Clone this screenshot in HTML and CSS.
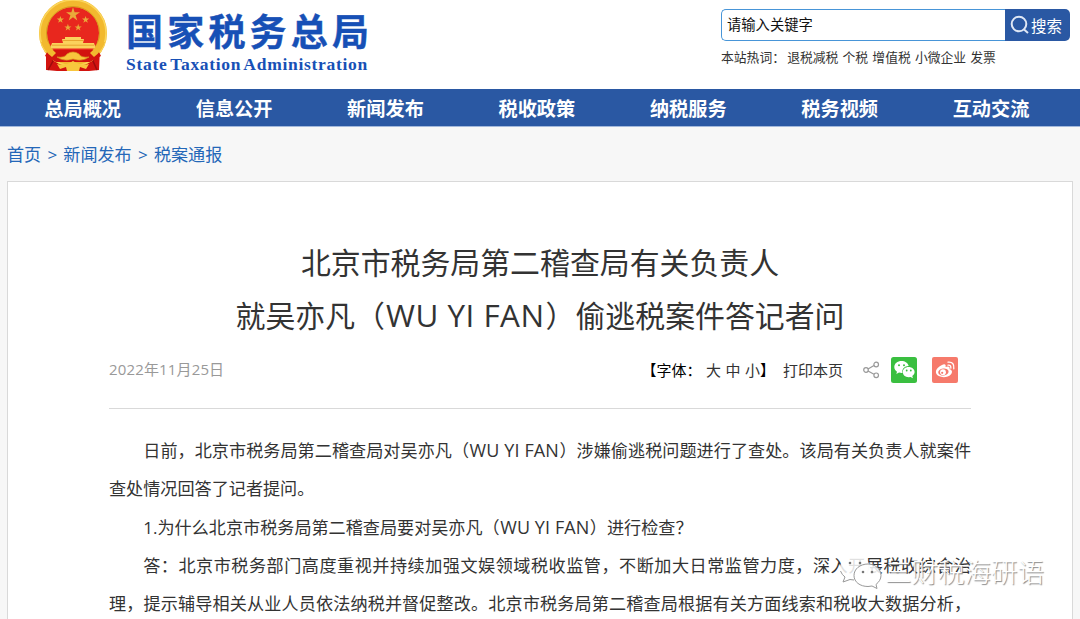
FILE: index.html
```html
<!DOCTYPE html>
<html lang="zh-CN">
<head>
    <meta charset="UTF-8">
    <meta name="viewport" content="width=device-width, initial-scale=1.0">
    <title>国家税务总局</title>
    <link rel="stylesheet" href="styles.css">
</head>
<body>
    <header class="header">
        <a class="logo" href="#">
            <svg class="emblem" width="70" height="74" viewBox="0 0 70 74">
                <path d="M8 48 L26 58 L35 68 L44 58 L62 48 L61 70 L51 71 L19 71 L8 70 L8 66 Z" fill="#d2130f"/>
                <path d="M10 52 L15 61 L10 70 M60 52 L55 61 L59 70" fill="none" stroke="#9c0c0c" stroke-width="1.5"/>
                <circle cx="35" cy="33" r="30" fill="#e8271e" stroke="#f2b92f" stroke-width="8"/>
                <circle cx="35" cy="33" r="33" fill="none" stroke="#fbd65b" stroke-width="1.5"/>
                <circle cx="35" cy="33" r="26.5" fill="none" stroke="#d79a1e" stroke-width="1"/>
                <path d="M35 7 L36.6 12.2 L42 12.2 L37.6 15.3 L39.3 20.4 L35 17.2 L30.7 20.4 L32.4 15.3 L28 12.2 L33.4 12.2 Z" fill="#e9a93a"/>
                <g fill="#e9a93a">
                    <path id="star" d="M22.4 16 L23.3 18.6 L26 18.6 L23.8 20.2 L24.6 22.8 L22.4 21.2 L20.2 22.8 L21 20.2 L18.8 18.6 L21.5 18.6 Z"/>
                    <use href="#star" x="25.2"/>
                    <use href="#star" x="7.5" y="7.8"/>
                    <use href="#star" x="17.8" y="7.8"/>
                </g>
                <path d="M27 37 H43 V39 H46 L45 43 H56 L58 48.500 H12 L14 43 H25 L24 39 H27 Z" fill="#fbd15c"/>
                <path d="M25 40.5 H45 M14 45.2 H56" stroke="#e39b25" stroke-width=".8"/>
                <path d="M10 50 L60 50 L63 56 L52 62 L18 62 L7 56 Z" fill="#d2130f"/>
                <path d="M3 42 Q6 51 14 57 L18 53 Q12 48 10 42 Z M67 42 Q64 51 56 57 L52 53 Q58 48 60 42 Z" fill="#f2b92f"/>
                <path d="M19 57 Q27 58 29 54 Q35 50 41 54 Q43 58 51 57 Q44 62 35 59 Q26 62 19 57 Z" fill="#f8c63d" stroke="#d79a1e" stroke-width=".7"/>
                <path d="M19 64 Q28 66 35 61 Q42 66 51 64 L48 69 L42 67 L41 71 H29 L28 67 L22 69 Z" fill="#f8c63d"/>
            </svg>
            <span class="logo-text">
                <span class="logo-cn">国家税务总局</span>
                <span class="logo-en">State Taxation Administration</span>
            </span>
        </a>
        <div class="search">
            <div class="search-box">
                <div class="search-input">请输入关键字</div>
                <button class="search-btn">
                    <svg width="20" height="20" viewBox="0 0 20 20" fill="none" stroke="#dfe7f5" stroke-width="2">
                        <circle cx="9" cy="9" r="7.3"/>
                        <path d="M13.5 14 L18 18"/>
                    </svg>
                    <span>搜索</span>
                </button>
            </div>
            <div class="hot-words">
                <span class="hot-label">本站热词：</span>
                <a href="#">退税减税</a>
                <a href="#">个税</a>
                <a href="#">增值税</a>
                <a href="#">小微企业</a>
                <a href="#">发票</a>
            </div>
        </div>
    </header>

    <nav class="nav">
        <a href="#">总局概况</a>
        <a href="#">信息公开</a>
        <a href="#">新闻发布</a>
        <a href="#">税收政策</a>
        <a href="#">纳税服务</a>
        <a href="#">税务视频</a>
        <a href="#">互动交流</a>
    </nav>

    <div class="breadcrumb">
        <a href="#">首页</a>
        <span>&gt;</span>
        <a href="#">新闻发布</a>
        <span>&gt;</span>
        <a href="#">税案通报</a>
    </div>

    <main class="article">
        <h1 class="title">北京市税务局第二稽查局有关负责人<br>就吴亦凡（<span class="latin">WU YI FAN</span>）偷逃税案件答记者问</h1>
        <div class="meta">
            <span class="date">2022年11月25日</span>
            <div class="tools">
                <div class="font-size"><span class="strong">【字体：</span><a href="#">大</a><a href="#">中</a><a href="#">小</a><span class="strong">】</span></div>
                <a class="print" href="#">打印本页</a>
                <svg class="share" width="17" height="18" viewBox="0 0 17 18" fill="none" stroke="#999" stroke-width="1.2">
                    <circle cx="3" cy="9" r="2.3"/>
                    <circle cx="13.2" cy="3.5" r="2.3"/>
                    <circle cx="13.2" cy="14.3" r="2.3"/>
                    <path d="M5 8 L11 4.6 M5 10 L11 13.2"/>
                </svg>
                <svg class="wechat" width="26" height="26" viewBox="0 0 26 26">
                    <rect width="26" height="26" rx="2.5" fill="#3abf40"/>
                    <path d="M10.5 4 C6.4 4 3.3 6.6 3.3 10 C3.3 12 4.4 13.6 6 14.8 L5.3 17 L8 15.6 Q10 16.2 11.5 16 C10.4 12 14 8.8 17.7 9 C17 6 14 4 10.5 4 Z" fill="#fff"/>
                    <path d="M17.6 10 C14.2 10 11.8 12.3 11.8 15.1 C11.8 18 14.2 20.2 17.6 20.2 L19.6 19.9 L21.9 21.2 L21.3 19 C22.8 18 23.6 16.6 23.6 15.1 C23.6 12.3 21 10 17.6 10 Z" fill="#fff"/>
                    <g fill="#3abf40">
                        <circle cx="8" cy="8.2" r="1"/>
                        <circle cx="13" cy="8.2" r="1"/>
                        <circle cx="15.7" cy="13.5" r=".9"/>
                        <circle cx="19.8" cy="13.5" r=".9"/>
                    </g>
                </svg>
                <svg class="weibo" width="26" height="26" viewBox="0 0 26 26">
                    <rect width="26" height="26" rx="2" fill="#f67a6b"/>
                    <path d="M10 8 C13 6.3 14.3 8 13.5 10 C16.5 8.8 18.3 9.7 17.5 12.2 C20.3 13 20.8 15.3 18.8 17.4 C16.3 20.3 10.5 21 6.8 19 C3 17 3.3 13.5 5.7 11 Q7.6 9 10 8 Z" fill="#fff"/>
                    <ellipse cx="11.4" cy="15" rx="5.2" ry="3.5" transform="rotate(-8 11.4 15)" fill="#f67a6b"/>
                    <circle cx="11" cy="15.2" r="2.9" fill="#fff"/>
                    <circle cx="10.2" cy="15.8" r="1.1" fill="#f67a6b"/>
                    <path d="M16 8.2 Q19.2 7.8 18.8 11.2 M16 5.2 Q22.6 4.5 21.8 11.8" fill="none" stroke="#fff" stroke-width="1.3" stroke-linecap="round"/>
                </svg>
            </div>
        </div>
        <div class="content">
            <p>日前，北京市税务局第二稽查局对吴亦凡（<span class="latin">WU YI FAN</span>）涉嫌偷逃税问题进行了查处。该局有关负责人就案件查处情况回答了记者提问。</p>
            <p>1.为什么北京市税务局第二稽查局要对吴亦凡（<span class="latin">WU YI FAN</span>）进行检查？</p>
            <p class="full">答：北京市税务部门高度重视并持续加强文娱领域税收监管，不断加大日常监管力度，深入开展税收综合治理，提示辅导相关从业人员依法纳税并督促整改。北京市税务局第二稽查局根据有关方面线索和税收大数据分析，</p>
        </div>
    </main>

    <div class="watermark">
        <svg width="46" height="36" viewBox="0 0 46 36">
            <path d="M17 2 C8 2 2 7 2 14 C2 18 4 21 7 23 L5 29 L12 26 L17 27 C26 27 32 21 32 14 C32 7 26 2 17 2 Z" fill="#fff" fill-opacity=".85"/>
            <path d="M2.5 17 Q4 21 7 23 L5 28 L12 25.5 L16 26" fill="none" stroke="#999" stroke-width="1"/>
            <path d="M30 10 C22 10 16 15 16 21.500 C16 28 22 32.500 30 32.500 L34 32 L39 34.500 L38 30.500 C41 28 43 25 43 21.500 C43 15 37 10 30 10 Z" fill="#fff" fill-opacity=".85" stroke="#999" stroke-width="1"/>
            <g fill="#777">
                <circle cx="12" cy="9" r="1.3"/>
                <circle cx="22" cy="9" r="1.3"/>
                <circle cx="25" cy="18" r="1.3"/>
                <circle cx="34" cy="18" r="1.3"/>
            </g>
        </svg>
        <span>三财税海研语</span>
    </div>
</body>
</html>
```
FILE: styles.css
```css
* {
    margin: 0;
    padding: 0;
    box-sizing: border-box;
}

body {
    height: 619px;
    overflow: hidden;
    display: flex;
    flex-direction: column;
    position: relative;
    background-color: #f7f7f7;
    color: #333;
    font-family: "Open Sans", "Noto Sans CJK SC", sans-serif;
}

a {
    color: inherit;
    text-decoration: none;
}

/* Header */
.header {
    flex: none;
    height: 89px;
    display: flex;
    justify-content: space-between;
    align-items: flex-start;
    padding: 0 10px 0 38px;
    background-color: #fff;
}

.logo {
    display: flex;
    gap: 18px;
    color: #1750b6;
}

.emblem {
    display: block;
}

.logo-text {
    display: flex;
    flex-direction: column;
    padding-top: 6px;
}

.logo-cn {
    font: 700 37px/48px "Noto Sans CJK SC", sans-serif;
    letter-spacing: 4.2px;
    white-space: nowrap;
    -webkit-text-stroke: 0.4px #1750b6;
}

.logo-en {
    font: bold 17.5px/20px "Liberation Serif", serif;
    letter-spacing: 0.7px;
    word-spacing: -2px;
    white-space: nowrap;
}

.search {
    width: 349px;
    padding-top: 9px;
}

.search-box {
    display: flex;
    height: 32px;
}

.search-input {
    flex: 1;
    border: 1px solid #4795d8;
    border-right: none;
    border-radius: 5px 0 0 5px;
    padding-left: 5px;
    font-size: 14.3px;
    line-height: 30px;
    color: #111;
    background-color: #fff;
}

.search-btn {
    width: 65px;
    display: flex;
    align-items: center;
    gap: 1px;
    padding-left: 5px;
    border: none;
    border-radius: 0 5px 5px 0;
    background-color: #2a58a3;
    color: #fff;
    font-family: inherit;
    font-size: 15.5px;
}

.hot-words {
    display: flex;
    gap: 4.2px;
    padding-top: 7px;
    font-size: 12.8px;
    line-height: 18px;
    white-space: nowrap;
}

.hot-label {
    margin-right: -2px;
}

/* Navigation */
.nav {
    flex: none;
    height: 38px;
    display: flex;
    padding: 0 13px 0 7px;
    background-color: #2a58a3;
    border-bottom: 1px solid #a3b9dc;
}

.nav a {
    width: 151.4px;
    flex: none;
    text-align: center;
    color: #fff;
    font-size: 19.2px;
    font-weight: bold;
    line-height: 40px;
}

.breadcrumb {
    flex: none;
    height: 54px;
    display: flex;
    gap: 6.2px;
    padding-left: 7px;
    color: #2467b8;
    font-size: 17.1px;
    line-height: 56px;
}

/* Article */
.article {
    flex: 1;
    min-height: 0;
    overflow: hidden;
    margin: 0 7px;
    padding: 54px 101px 0;
    border: 1px solid #d9d9d9;
    border-bottom: none;
    background-color: #fff;
}

.title {
    text-align: center;
    font-size: 29.9px;
    font-weight: normal;
    line-height: 53px;
}

.latin {
    font-size: 1.05em;
    line-height: 1;
}

.title .latin {
    letter-spacing: 0.5px;
    margin: 0 1px;
}

.meta {
    height: 67px;
    display: flex;
    justify-content: space-between;
    align-items: flex-start;
    border-bottom: 1px solid #d9d9d9;
    padding-top: 15px;
    font-size: 15px;
}

.date {
    color: #999;
    line-height: 25px;
    letter-spacing: 0.15px;
}

.tools {
    display: flex;
    align-items: center;
    padding-right: 13px;
    line-height: 24px;
}

.font-size {
    display: flex;
    gap: 4.5px;
}

.strong {
    color: #000;
}

.font-size .strong:last-child {
    margin-left: -4.5px;
}

.print {
    margin-left: 8px;
}

.share {
    margin-left: 20px;
}

.wechat {
    margin-left: 11px;
}

.weibo {
    margin-left: 15px;
}

.content {
    padding-top: 23px;
    font-size: 17.12px;
    line-height: 38.3px;
    text-align: justify;
}

.content p {
    text-indent: 2em;
}

.content .latin {
    letter-spacing: 0.1px;
    margin: 0 0.5px;
}

.content .full {
    text-align-last: justify;
}

/* Watermark */
.watermark {
    position: absolute;
    left: 838px;
    top: 554px;
    display: flex;
    align-items: center;
    gap: 1px;
    color: #fff;
    font-size: 26.5px;
    font-weight: 300;
    line-height: 34px;
    white-space: nowrap;
    text-shadow: 1px 1px 1px #888;
}
```
